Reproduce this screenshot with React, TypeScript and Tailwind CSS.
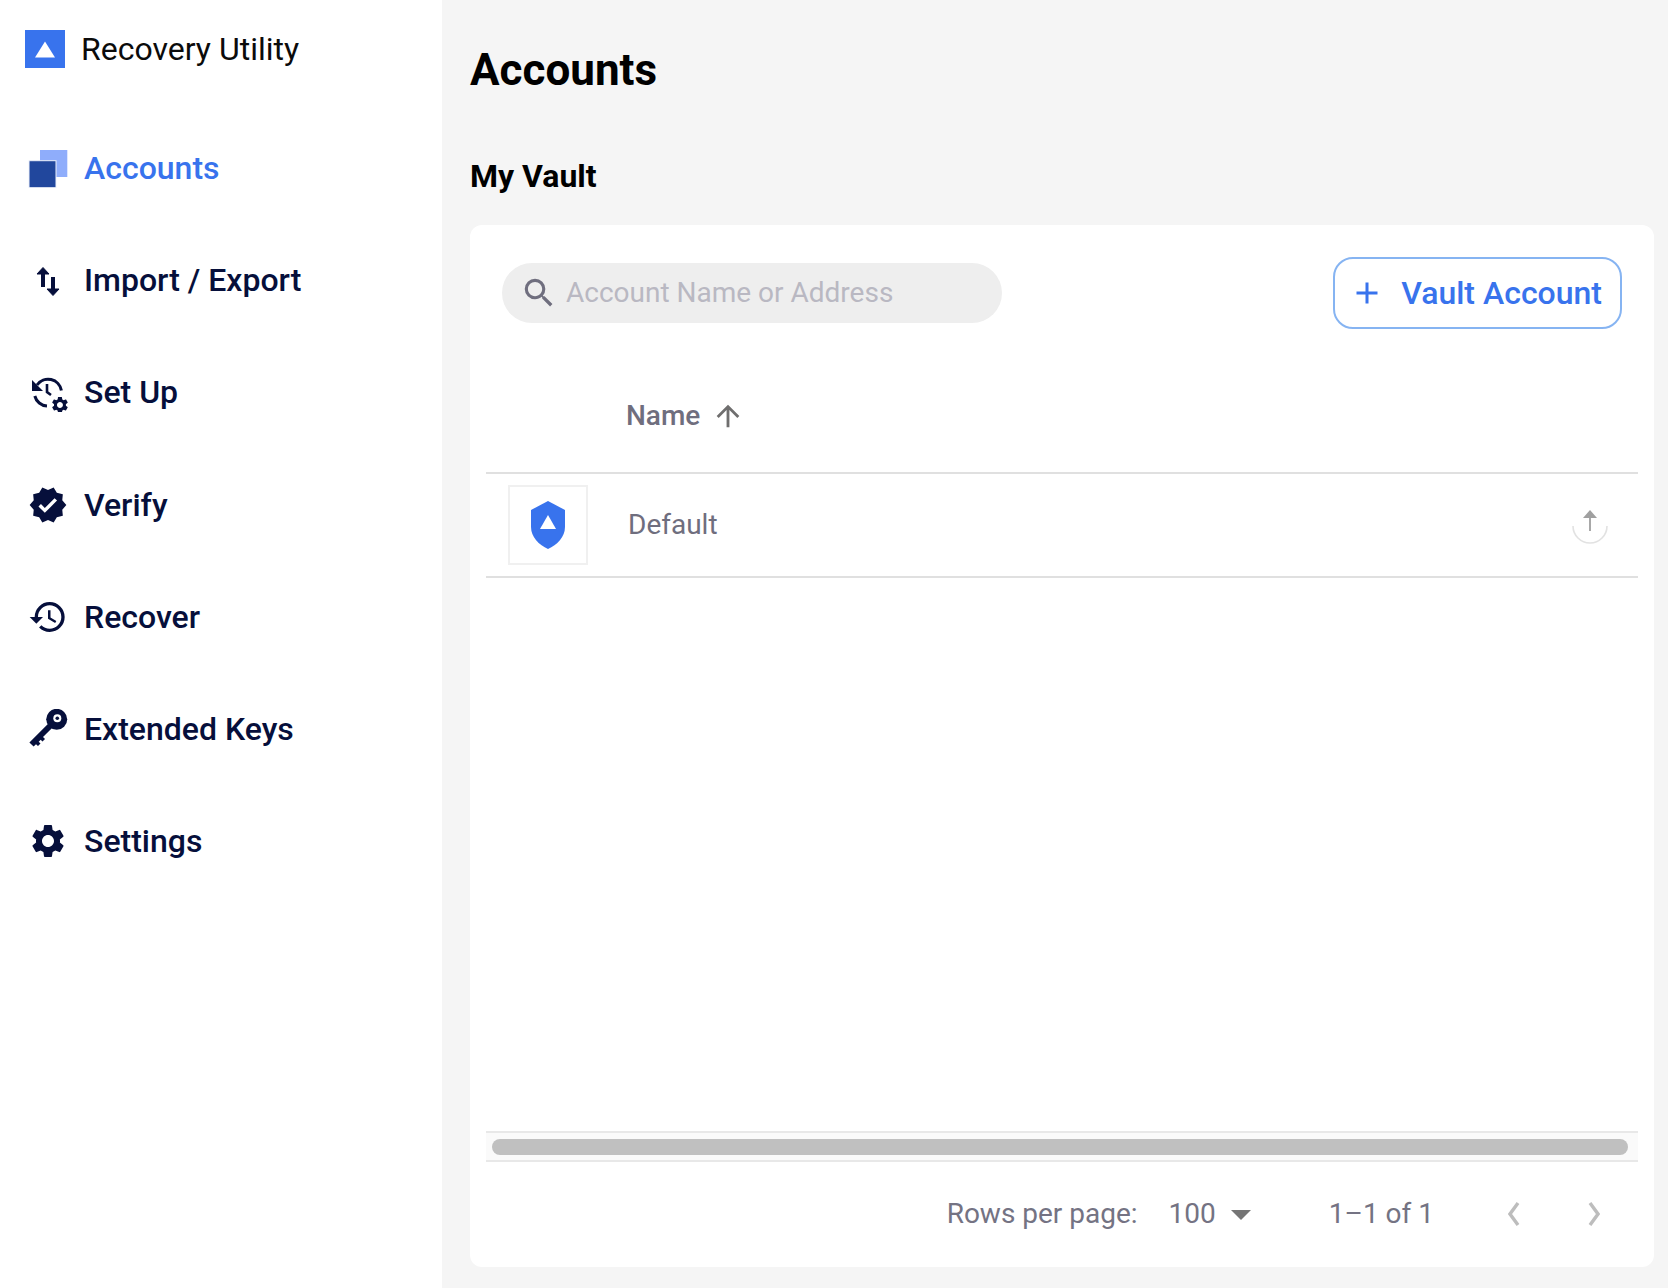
import type { ReactNode } from 'react';
import { MdHistory, MdSettings, MdVerified, MdSearch, MdArrowUpward, MdArrowDropDown, MdAdd } from 'react-icons/md';

function LogoTriangle({ className }: { className?: string }) {
  return (
    <svg viewBox="0 0 20 16" className={className}>
      <path d="M10 0 L20 16 L0 16 Z" fill="#fff" />
    </svg>
  );
}

function AccountsIcon() {
  return (
    <svg viewBox="0 0 40 40" className="h-10 w-10">
      <rect x="12" y="2" width="27.3" height="27" fill="#8fadfb" />
      <rect x="1" y="12.7" width="27" height="27" fill="#21479d" stroke="#eef2fb" strokeWidth="1" />
    </svg>
  );
}

function ImportExportIcon() {
  return (
    <svg viewBox="0 0 40 40" className="h-10 w-10" fill="none" stroke="#060f3b">
      <path d="M15 27 V10" strokeWidth="4" />
      <path d="M9 14 L15 7.5 L21 14 Z" fill="#060f3b" strokeWidth="1" />
      <path d="M25 17 V32" strokeWidth="4" />
      <path d="M19 29 L25 35.5 L31 29 Z" fill="#060f3b" strokeWidth="1" />
    </svg>
  );
}

function SetUpIcon() {
  return (
    <svg viewBox="0 0 40 40" className="h-10 w-10" fill="none">
      <path d="M9 13 A13.5 13.5 0 0 1 33.4 18.5" stroke="#060f3b" strokeWidth="3" />
      <path d="M6.8 24 A13.5 13.5 0 0 0 19 34" stroke="#060f3b" strokeWidth="3" />
      <path d="M4 8 V19 H15 Z" fill="#060f3b" />
      <path d="M19 12 V20 L23 23" stroke="#060f3b" strokeWidth="2.6" />
      <g transform="translate(22 23) scale(0.83)">
        <MdSettings size={24} color="#060f3b" />
      </g>
    </svg>
  );
}

function KeyIcon() {
  return (
    <svg viewBox="0 0 40 40" className="h-10 w-10">
      <circle cx="28.7" cy="10.3" r="10.5" fill="#060f3b" />
      <path
        fill="#060f3b"
        d="M19.9 14.9 L1.4 33.4 L5.6 37.6 L8 35.2 L10 37 L12.5 34.5 L10.7 32.7 L12.7 30.7 L14.5 32.5 L17 30 L15 27.9 L24.1 19.1 Z"
      />
      <circle cx="29.3" cy="9.3" r="4" fill="#fff" />
      <circle cx="29.3" cy="9.3" r="1.8" fill="#060f3b" />
    </svg>
  );
}

function ShieldIcon() {
  return (
    <svg viewBox="0 0 34 48" className="h-12 w-[34px]">
      <path d="M17 0 L34 9 V26 C34 36 26 44 17 48 C8 44 0 36 0 26 V9 Z" fill="#3873ed" />
      <path d="M17 14 L25 28 H9 Z" fill="#fff" />
    </svg>
  );
}

function ExportIcon() {
  return (
    <svg viewBox="0 0 36 36" className="mt-1 h-9 w-9" fill="none">
      <path d="M1 17 A17 17 0 0 0 35 17" stroke="#e2e2e2" strokeWidth="1.6" />
      <path d="M18 22 V6" stroke="#a8a8a8" strokeWidth="2" />
      <path d="M11 9 L18 1 L25 9 Z" fill="#a0a0a0" />
    </svg>
  );
}

function PageChevron({ flip }: { flip?: boolean }) {
  return (
    <svg viewBox="0 0 12 24" className="h-6 w-3" fill="none">
      <path d={flip ? 'M2 1 L10 12 L2 23' : 'M10 1 L2 12 L10 23'} stroke="#bdbdbd" strokeWidth="3.4" />
    </svg>
  );
}

const navItems: { label: string; icon: ReactNode; active?: boolean }[] = [
  { label: 'Accounts', icon: <AccountsIcon />, active: true },
  { label: 'Import / Export', icon: <ImportExportIcon /> },
  { label: 'Set Up', icon: <SetUpIcon /> },
  { label: 'Verify', icon: <MdVerified size={42} color="#060f3b" /> },
  { label: 'Recover', icon: <MdHistory size={42} color="#060f3b" /> },
  { label: 'Extended Keys', icon: <KeyIcon /> },
  { label: 'Settings', icon: <MdSettings size={42} color="#060f3b" /> },
];

export default function App() {
  return (
    <div className="flex h-[1288px] w-[1668px] overflow-hidden bg-[#f5f5f5] font-['Roboto',sans-serif]">
      <aside className="flex w-[442px] shrink-0 flex-col bg-white">
        <div className="flex h-[98px] items-start gap-4 pt-[30px] pl-[25px]">
          <div className="flex h-[38px] w-10 items-center justify-center bg-[#3873ed]">
            <LogoTriangle className="h-[19px] w-5" />
          </div>
          <span className="text-[32px] leading-[38px] text-[#0b0b0b]">Recovery Utility</span>
        </div>
        <nav className="flex flex-col pt-[14px]">
          {navItems.map((item) => (
            <div key={item.label} className="flex h-[112.2px] items-center pl-[28px]">
              <div className="flex h-10 w-10 shrink-0 items-center justify-center">{item.icon}</div>
              <span
                className={
                  item.active
                    ? 'ml-[16px] text-[32px] font-medium text-[#3873ed]'
                    : 'ml-[16px] text-[32px] font-medium text-[#060f3b]'
                }
              >
                {item.label}
              </span>
            </div>
          ))}
        </nav>
      </aside>

      <main className="flex min-w-0 flex-1 flex-col pt-[44px] pr-[14px] pb-[21px] pl-[28px]">
        <h1 className="text-[44px] leading-[52px] font-bold text-black">Accounts</h1>
        <h2 className="mt-[61px] text-[32px] leading-[38px] font-bold text-black">My Vault</h2>
        <section className="mt-[30px] flex min-h-0 flex-1 flex-col rounded-xl bg-white px-4">
          <div className="flex items-start justify-between pt-8 pr-4 pl-4">
            <div className="mt-[6px] flex h-[60px] w-[500px] items-center rounded-full bg-[#eeeeee] pl-[18px]">
              <MdSearch size={38} color="#6f6e7e" />
              <span className="ml-2 text-[28px] text-[#b9b8c2]">Account Name or Address</span>
            </div>
            <button className="flex h-[72px] w-[289px] items-center justify-end rounded-[20px] border-2 border-[#86b4f2] pr-[18px] text-[#3873ed]">
              <MdAdd size={36} />
              <span className="ml-[16px] text-[32px] font-medium">Vault Account</span>
            </button>
          </div>
          <div className="mt-[31px] flex h-[114px] items-center border-b-2 border-[#e0e0e0] pl-[140px]">
            <span className="text-[28px] font-medium text-[#6f6e7e]">Name</span>
            <MdArrowUpward size={34} color="#6f6e6e" className="ml-[11px]" />
          </div>
          <div className="flex h-[104px] items-center border-b-2 border-[#e0e0e0] pr-[30px] pb-[1px] pl-[22px]">
            <div className="flex h-20 w-20 items-center justify-center border-2 border-[#f0f0f0]">
              <ShieldIcon />
            </div>
            <span className="ml-[40px] flex-1 text-[28px] text-[#6f6e7e]">Default</span>
            <ExportIcon />
          </div>
          <div className="flex-1" />
          <div className="flex h-[31px] items-center border-y-2 border-[#e8e8e8] bg-[#fafafa] pr-[10px] pl-[6px]">
            <div className="h-4 w-full rounded-full bg-[#c0c0c0]" />
          </div>
          <div className="flex h-[105px] items-center justify-end pr-[38px] pb-[2px] text-[#747383]">
            <span className="text-[28px]">Rows per page:</span>
            <span className="ml-[31px] text-[28px]">100</span>
            <MdArrowDropDown size={48} color="#757575" className="ml-[1px]" />
            <span className="ml-[64px] text-[28px]">1–1 of 1</span>
            <div className="ml-[74px]">
              <PageChevron />
            </div>
            <div className="ml-[68px]">
              <PageChevron flip />
            </div>
          </div>
        </section>
      </main>
    </div>
  );
}
